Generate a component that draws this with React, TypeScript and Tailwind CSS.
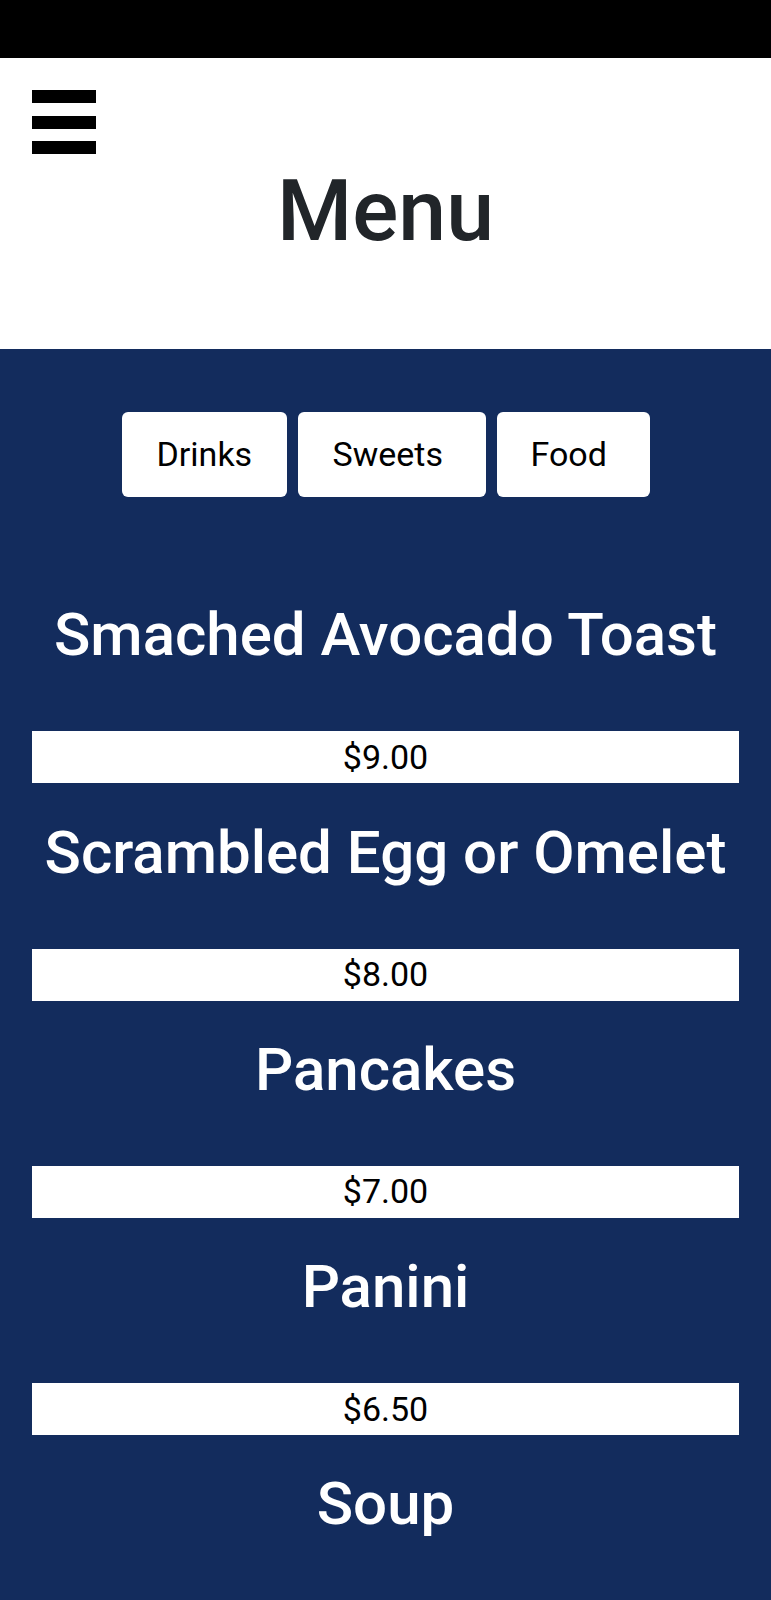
import React from "react";

const items = [
  { name: "Smached Avocado Toast", price: "$9.00" },
  { name: "Scrambled Egg or Omelet", price: "$8.00" },
  { name: "Pancakes", price: "$7.00" },
  { name: "Panini", price: "$6.50" },
  { name: "Soup", price: "" },
];

export default function App() {
  return (
    <div className="w-[771px] h-[1600px] overflow-hidden bg-[#132c5d] font-['Roboto',sans-serif]">
      <div className="h-[58px] bg-black" />
      <div className="h-[291px] bg-white flex flex-col">
        <div className="ml-[32px] mt-[32px] w-[64px] flex flex-col gap-[12.5px]">
          <div className="h-[13px] bg-black" />
          <div className="h-[13px] bg-black" />
          <div className="h-[13px] bg-black" />
        </div>
        <h1 className="mt-[5px] text-center text-[86px] leading-[1.2] font-medium text-[#212529]">Menu</h1>
      </div>
      <div className="flex justify-center gap-[11px] pt-[63px]">
        <button className="w-[165px] h-[85px] bg-white rounded-[6px] text-[34px] text-black text-left pl-[35px]">Drinks</button>
        <button className="w-[188px] h-[85px] bg-white rounded-[6px] text-[34px] text-black text-left pl-[35px]">Sweets</button>
        <button className="w-[153px] h-[85px] bg-white rounded-[6px] text-[34px] text-black text-left pl-[34px]">Food</button>
      </div>
      <div className="mt-[69px] flex flex-col">
        {items.map((it) => (
          <div key={it.name} className="mt-[33.25px] flex flex-col">
            <h2 className="text-center text-[60px] leading-[72px] font-medium text-white">{it.name}</h2>
            <div className="mt-[60px] mx-[32px] h-[52px] bg-white flex items-center justify-center text-[34px] text-black">
              {it.price}
            </div>
          </div>
        ))}
      </div>
    </div>
  );
}
